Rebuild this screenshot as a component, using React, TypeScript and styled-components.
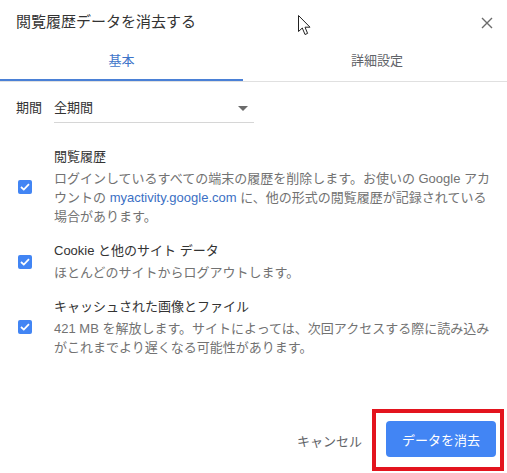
import React, { useState } from 'react';
import styled, { createGlobalStyle } from 'styled-components';

type Item = {
  id: string;
  title: string;
  desc: React.ReactNode;
};

const App = () => {
  const [tab, setTab] = useState(0);
  const [checked, setChecked] = useState<Record<string, boolean>>({
    history: true,
    cookie: true,
    cache: true,
  });

  const items: Item[] = [
    {
      id: 'history',
      title: '閲覧履歴',
      desc: (
        <>
          ログインしているすべての端末の履歴を削除します。お使いの Google アカウントの{' '}
          <Link href="#">myactivity.google.com</Link> に、他の形式の閲覧履歴が記録されている場合があります。
        </>
      ),
    },
    {
      id: 'cookie',
      title: 'Cookie と他のサイト データ',
      desc: 'ほとんどのサイトからログアウトします。',
    },
    {
      id: 'cache',
      title: 'キャッシュされた画像とファイル',
      desc: '421 MB を解放します。サイトによっては、次回アクセスする際に読み込みがこれまでより遅くなる可能性があります。',
    },
  ];

  const toggle = (id: string) => setChecked(state => ({ ...state, [id]: !state[id] }));

  return (
    <>
      <GlobalStyle />
      <Dialog>
        <Header>
          <Title>閲覧履歴データを消去する</Title>
          <CloseButton aria-label="close">
            <svg width="12" height="12" viewBox="0 0 12 12">
              <path d="M1 1 L11 11 M11 1 L1 11" stroke="#6b6b6b" strokeWidth="1.4" />
            </svg>
          </CloseButton>
        </Header>

        <TabBar>
          {['基本', '詳細設定'].map((label, index) => (
            <Tab key={label} $active={tab === index} onClick={() => setTab(index)}>
              {label}
            </Tab>
          ))}
        </TabBar>

        <Body>
          <SelectRow>
            <SelectLabel>期間</SelectLabel>
            <Select>
              <span>全期間</span>
              <Arrow />
            </Select>
          </SelectRow>

          <ItemList>
            {items.map(item => (
              <Row key={item.id}>
                <Checkbox $checked={checked[item.id]} onClick={() => toggle(item.id)}>
                  {checked[item.id] && (
                    <svg width="10" height="8" viewBox="0 0 10 8">
                      <path d="M1 4 L3.8 6.6 L9 1.2" fill="none" stroke="#fff" strokeWidth="1.8" />
                    </svg>
                  )}
                </Checkbox>
                <TextBlock>
                  <ItemTitle>{item.title}</ItemTitle>
                  <ItemDesc>{item.desc}</ItemDesc>
                </TextBlock>
              </Row>
            ))}
          </ItemList>
        </Body>

        <Footer>
          <CancelButton>キャンセル</CancelButton>
          <Highlight>
            <PrimaryButton>データを消去</PrimaryButton>
          </Highlight>
        </Footer>

        <Cursor width="14" height="21" viewBox="0 0 14 21">
          <path
            d="M0.5 0.5 L0.5 16.5 L4.3 13 L7 19.5 L9.6 18.4 L7 12.2 L12 12.2 Z"
            fill="#fff"
            stroke="#222"
            strokeWidth="1"
            strokeLinejoin="round"
          />
        </Cursor>
      </Dialog>
    </>
  );
};

const GlobalStyle = createGlobalStyle`
  * {
    box-sizing: border-box;
  }

  body {
    margin: 0;
    background-color: #fff;
    font-family: "Liberation Sans", "Noto Sans CJK JP", sans-serif;
    color: #333;
  }
`;

const Dialog = styled.div`
  position: relative;
  display: flex;
  flex-direction: column;
  width: 507px;
  height: 473px;
  overflow: hidden;
  background-color: #fff;
`;

const Header = styled.div`
  display: flex;
  align-items: center;
  justify-content: space-between;
  height: 40px;
  padding: 12px 10px 8px 16px;
`;

const Title = styled.h1`
  margin: 0;
  font-size: 15px;
  font-weight: 400;
  line-height: 20px;
  color: #333;
`;

const CloseButton = styled.button`
  display: flex;
  align-items: center;
  justify-content: center;
  width: 20px;
  height: 20px;
  padding: 0;
  margin-top: 2px;
  border: 0;
  background: none;
  cursor: pointer;
`;

const TabBar = styled.div`
  display: grid;
  grid-template-columns: 243px 268px;
  border-bottom: 1px solid #e0e0e0;
`;

const Tab = styled.button<{ $active: boolean }>`
  height: 41px;
  padding: 3px 0 0;
  border: 0;
  border-bottom: 2px solid ${({ $active }) => ($active ? '#4a80d6' : 'transparent')};
  background: none;
  font-family: inherit;
  font-size: 13px;
  line-height: 20px;
  color: ${({ $active }) => ($active ? '#3e74c9' : '#5f6368')};
  cursor: pointer;
`;

const Body = styled.div`
  padding: 15px 16px 0;
`;

const SelectRow = styled.div`
  display: flex;
  align-items: flex-start;
  gap: 12px;
`;

const SelectLabel = styled.span`
  padding-top: 1px;
  font-size: 13px;
  line-height: 20px;
  color: #333;
`;

const Select = styled.div`
  display: flex;
  align-items: center;
  justify-content: space-between;
  width: 200px;
  height: 26px;
  padding: 1px 6px 4px 0;
  border-bottom: 1px solid #d6d6d6;
  font-size: 13px;
  line-height: 20px;
  color: #333;
`;

const Arrow = styled.span`
  width: 0;
  height: 0;
  border-left: 5px solid transparent;
  border-right: 5px solid transparent;
  border-top: 5px solid #6b6b6b;
  margin-top: 1px;
`;

const ItemList = styled.div`
  display: flex;
  flex-direction: column;
  gap: 15px;
  margin-top: 24px;
`;

const Row = styled.div`
  display: flex;
  align-items: center;
  gap: 22px;
`;

const Checkbox = styled.button<{ $checked: boolean }>`
  flex: none;
  display: flex;
  align-items: center;
  justify-content: center;
  width: 14px;
  height: 14px;
  margin-left: 2px;
  padding: 0;
  border: ${({ $checked }) => ($checked ? '0' : '2px solid #6b6b6b')};
  border-radius: 2px;
  background-color: ${({ $checked }) => ($checked ? '#4285f4' : '#fff')};
  cursor: pointer;
`;

const TextBlock = styled.div`
  width: 440px;
`;

const ItemTitle = styled.div`
  font-size: 13px;
  line-height: 20px;
  color: #333;
`;

const ItemDesc = styled.div`
  margin-top: 2px;
  font-size: 13px;
  line-height: 19px;
  color: #727272;
`;

const Link = styled.a`
  color: #3b6fc4;
  text-decoration: none;
`;

const Footer = styled.div`
  display: flex;
  align-items: center;
  justify-content: flex-end;
  margin-top: auto;
  padding: 0 3px 2px 0;
`;

const CancelButton = styled.button`
  height: 36px;
  padding: 0 10px;
  border: 0;
  background: none;
  font-family: inherit;
  font-size: 13px;
  color: #5f6368;
  cursor: pointer;
`;

const Highlight = styled.div`
  padding: 8px 4px 10px 10px;
  border: 4px solid #e3141e;
`;

const PrimaryButton = styled.button`
  width: 110px;
  height: 36px;
  padding: 0;
  border: 0;
  border-radius: 4px;
  background-color: #4285f4;
  font-family: inherit;
  font-size: 13px;
  color: #fff;
  cursor: pointer;
`;

const Cursor = styled.svg`
  position: absolute;
  top: 15px;
  left: 298px;
  pointer-events: none;
`;

export default App;
